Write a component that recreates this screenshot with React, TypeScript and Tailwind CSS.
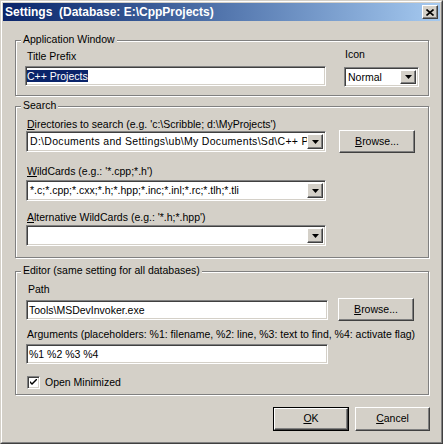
import React, { ReactNode } from 'react'

// Win2000-style "Settings" dialog

const sunken =
  'border border-t-[#808080] border-l-[#808080] border-b-white border-r-white shadow-[inset_1px_1px_0_#404040,inset_-1px_-1px_0_#d4d0c8] bg-white'
const raised =
  'border border-t-white border-l-white border-b-[#404040] border-r-[#404040] shadow-[inset_-1px_-1px_0_#808080] bg-[#d4d0c8]'

function Group({ title, className, children }: { title: string; className?: string; children: ReactNode }) {
  return (
    <div className={`relative border border-[#808080] shadow-[inset_1px_1px_0_#fff,1px_1px_0_#fff] ${className ?? ''}`}>
      <span className="absolute -top-[8px] left-[5px] bg-[#d4d0c8] px-[2px] leading-[13px]">{title}</span>
      {children}
    </div>
  )
}

function Arrow() {
  return (
    <svg width="7" height="4" viewBox="0 0 7 4">
      <path d="M0 0h7L3.5 4z" fill="#000" />
    </svg>
  )
}

function DropButton() {
  return (
    <div className={`${raised} w-[16px] h-full flex items-center justify-center shrink-0`}>
      <Arrow />
    </div>
  )
}

function Combo({ value, className, textClass }: { value?: string; className?: string; textClass?: string }) {
  return (
    <div className={`${sunken} flex items-stretch p-[2px] ${className ?? ''}`}>
      <div className={`flex-1 overflow-hidden whitespace-nowrap pl-[1px] leading-[15px] ${textClass ?? ''}`}>{value}</div>
      <DropButton />
    </div>
  )
}

function Button({ children, isDefault, className }: { children: ReactNode; isDefault?: boolean; className?: string }) {
  const inner = (
    <div className={`${raised} w-full h-full flex items-center justify-center`}>{children}</div>
  )
  return isDefault ? (
    <div className={`border border-black ${className ?? ''}`}>{inner}</div>
  ) : (
    <div className={className}>{inner}</div>
  )
}

export default function App() {
  return (
    <div className="w-[443px] h-[444px] bg-[#d4d0c8] border border-t-[#d4d0c8] border-l-[#d4d0c8] border-b-[#404040] border-r-[#404040] font-['Liberation_Sans',Arial,sans-serif] text-[10.5px] text-black overflow-hidden">
      <div className="h-full border border-t-white border-l-white border-b-[#808080] border-r-[#808080] p-[1px]">
        {/* Title bar */}
        <div className="h-[18px] flex items-center bg-gradient-to-r from-[#0a246a] to-[#a6caf0] pl-[2px] pr-[2px]">
          <span className="flex-1 text-white font-bold text-[12px] whitespace-pre leading-[18px]">
            Settings  (Database: E:\CppProjects)
          </span>
          <div className={`${raised} w-[16px] h-[14px] flex items-center justify-center`}>
            <svg width="8" height="7" viewBox="0 0 8 7">
              <path d="M0.5 0.5L7.5 6.5M7.5 0.5L0.5 6.5" stroke="#000" strokeWidth="1.6" />
            </svg>
          </div>
        </div>

        <div className="pl-[12px]">
          {/* Application Window */}
          <Group title="Application Window" className="w-[414px] h-[56px] mt-[19px]">
            <div className="flex pl-[9px] pt-[9px]">
              <div className="w-[301px] flex flex-col">
                <span className="pl-[2px] leading-[13px]">Title Prefix</span>
                <div className={`${sunken} h-[20px] mt-[3px] pl-[1px] pt-[2px] leading-[15px]`}>
                  <span className="bg-[#0a246a] text-white">C++ Projects</span>
                </div>
              </div>
              <div className="w-[75px] ml-[18px] flex flex-col -mt-[2px]">
                <span className="pl-[1px] leading-[13px]">Icon</span>
                <Combo value="Normal" className="h-[20px] mt-[6px]" />
              </div>
            </div>
          </Group>

          {/* Search */}
          <Group title="Search" className="w-[414px] h-[152px] mt-[10px]">
            <div className="flex flex-col pl-[10px] pt-[11px]">
              <span className="leading-[13px] pl-[1px]">
                <u>D</u>irectories to search (e.g. 'c:\Scribble; d:\MyProjects')
              </span>
              <div className="flex items-start">
                <Combo
                  value="D:\Documents and Settings\ub\My Documents\Sd\C++ Pr"
                  className="w-[300px] h-[21px]"
                  textClass="tracking-[0.3px]"
                />
                <Button className="w-[76px] h-[23px] ml-[13px] -mt-[1px]">
                  <span>
                    <u>B</u>rowse...
                  </span>
                </Button>
              </div>
              <span className="leading-[13px] mt-[12px] pl-[1px]">
                <u>W</u>ildCards (e.g.: '*.cpp;*.h')
              </span>
              <Combo value="*.c;*.cpp;*.cxx;*.h;*.hpp;*.inc;*.inl;*.rc;*.tlh;*.tli" className="w-[300px] h-[21px] mt-[2px]" />
              <span className="leading-[13px] mt-[10px] pl-[1px]">
                <u>A</u>lternative WildCards (e.g.: '*.h;*.hpp')
              </span>
              <Combo className="w-[300px] h-[21px] mt-[1px]" />
            </div>
          </Group>

          {/* Editor */}
          <Group title="Editor (same setting for all databases)" className="w-[414px] h-[124px] mt-[13px]">
            <div className="flex flex-col pl-[10px] pt-[11px]">
              <span className="leading-[13px] pl-[2px]">Path</span>
              <div className="flex items-start mt-[4px]">
                <div className={`${sunken} w-[302px] h-[20px] pl-[2px] pt-[2px] leading-[15px]`}>Tools\MSDevInvoker.exe</div>
                <Button className="w-[76px] h-[23px] ml-[10px] -mt-[2px]">
                  <span>
                    <u>B</u>rowse...
                  </span>
                </Button>
              </div>
              <span className="leading-[13px] mt-[7px] pl-[1px] whitespace-nowrap">
                Arguments (placeholders: %1: filename, %2: line, %3: text to find, %4: activate flag)
              </span>
              <div className={`${sunken} w-[302px] h-[20px] mt-[3px] pl-[2px] pt-[2px] leading-[15px]`}>%1 %2 %3 %4</div>
              <div className="flex items-center mt-[12px] pl-[1px]">
                <div className={`${sunken} w-[13px] h-[13px] flex items-center justify-center`}>
                  <svg width="7" height="7" viewBox="0 0 7 7">
                    <path d="M0 2v2l2 2 5-5V-1L2 4z" fill="#000" />
                  </svg>
                </div>
                <span className="ml-[5px] leading-[13px]">Open Minimized</span>
              </div>
            </div>
          </Group>

          {/* Dialog buttons */}
          <div className="flex justify-end w-[415px] mt-[12px] gap-[6px]">
            <Button isDefault className="w-[76px] h-[24px]">
              <span>
                <u>O</u>K
              </span>
            </Button>
            <Button className="w-[75px] h-[24px]">
              <span>
                <u>C</u>ancel
              </span>
            </Button>
          </div>
        </div>
      </div>
    </div>
  )
}
